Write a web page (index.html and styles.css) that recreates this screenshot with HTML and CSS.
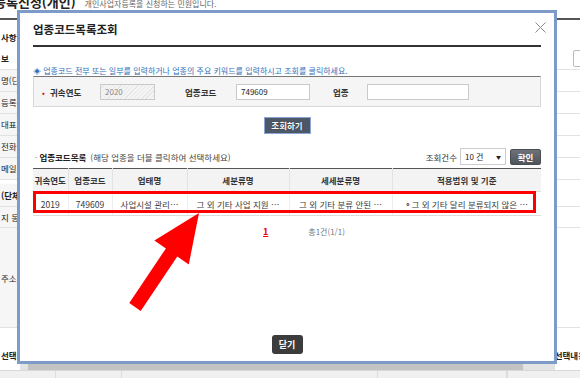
FILE: index.html
```html
<!DOCTYPE html>
<html lang="ko">
<head>
  <meta charset="UTF-8" />
  <title>등록신청(개인) - 업종코드목록조회</title>
  <link rel="stylesheet" href="styles.css">
</head>
<body>
  <div class="page">
    <div class="page-head">
      <h2>등록신청(개인)</h2>
      <span class="desc">개인사업자등록을 신청하는 민원입니다.</span>
    </div>
    <div class="form">
      <div class="row sec sec-first"><span class="lbl">사항</span></div>
      <div class="row sec"><span class="lbl">보</span><span class="bg-btn"></span></div>
      <div class="row"><span class="lbl">명(단체명)</span></div>
      <div class="row"><span class="lbl">등록번호</span></div>
      <div class="row"><span class="lbl">대표자</span></div>
      <div class="row"><span class="lbl">전화번호</span></div>
      <div class="row"><span class="lbl">메일주소</span></div>
      <div class="row row-t1"><span class="lbl lbl-b">(단체)</span></div>
      <div class="row row-t2"><span class="lbl">지 동</span></div>
      <div class="row row-addr"><span class="lbl">주소</span></div>
      <div class="row sec row-sel"><span class="lbl">선택</span><span class="sel-title">선택내용</span></div>
      <div class="grid-head">
        <span style="width:55px"></span><span style="width:65px"></span><span style="width:255px"></span><span style="width:128px"></span><span></span>
      </div>
    </div>
  </div>

  <!-- 업종코드 조회 레이어 -->
  <div class="layer">
    <div class="layer-head">
      <h3>업종코드목록조회</h3>
      <svg class="close" viewBox="0 0 11 11"><path d="M0.5 0.5L10.5 10.5M10.5 0.5L0.5 10.5" stroke="#8a8a8a" stroke-width="1" fill="none"/></svg>
    </div>

    <p class="guide">◈ 업종코드 전부 또는 일부를 입력하거나 업종의 주요 키워드를 입력하시고 조회를 클릭하세요.</p>

    <div class="search">
      <span class="req">•</span>
      <label class="l1">귀속연도</label>
      <span class="inp dis w1">2020</span>
      <label class="l2">업종코드</label>
      <span class="inp w2">749609</span>
      <label class="l3">업종</label>
      <span class="inp w3"></span>
    </div>

    <div class="btn-row">
      <span class="btn-search">조회하기</span>
    </div>

    <div class="list-head">
      <div class="list-title"><span class="dot">·</span><b>업종코드목록</b><span class="hint">(해당 업종을 더블 클릭하여 선택하세요)</span></div>
      <div class="cnt">
        <span>조회건수</span>
        <span class="sel">10 건<i>▼</i></span>
        <span class="btn-ok">확인</span>
      </div>
    </div>

    <div class="tbl-wrap">
      <table>
        <colgroup>
          <col style="width:35px"><col style="width:44px"><col style="width:75px"><col style="width:102px"><col style="width:103px"><col>
        </colgroup>
        <thead>
          <tr><th>귀속연도</th><th>업종코드</th><th>업태명</th><th>세분류명</th><th>세세분류명</th><th>적용범위 및 기준</th></tr>
        </thead>
        <tbody>
          <tr><td>2019</td><td>749609</td><td>사업시설 관리…</td><td>그 외 기타 사업 지원 …</td><td>그 외 기타 분류 안된 …</td><td>∘그 외 기타 달리 분류되지 않은 …</td></tr>
        </tbody>
      </table>
      <div class="mark"></div>
    </div>

    <div class="pager">
      <a href="#">1</a>
      <span class="total">총1건(1/1)</span>
    </div>

    <div class="foot">
      <span class="btn-close">닫기</span>
    </div>
  </div>

  <div class="hscroll"><span class="thumb"></span></div>

  <svg class="arrow" width="580" height="378" viewBox="0 0 580 378">
    <polygon points="199,213 188.8,264.4 177.3,256.4 140.7,311 129.3,303 165.9,248.4 154.4,240.4" fill="#ff0000"/>
  </svg>
</body>
</html>
```

FILE: styles.css
```css
body {
  margin: 0;
  width: 580px;
  height: 378px;
  overflow: hidden;
  position: relative;
  font-family: "Noto Sans CJK KR", "Noto Sans", sans-serif;
  font-size: 8.5px;
  color: #333;
  background: #fff;
}

/* background page */
.page-head {
  display: flex;
  align-items: baseline;
  height: 26px;
  margin: -8px 0 0 -6px;
}
.page-head h2 {
  margin: 0;
  font-size: 13px;
  line-height: 20px;
  font-weight: bold;
  color: #222;
}
.desc {
  margin-left: 9px;
  font-size: 8px;
  color: #666;
}
.form {
  border-top: 2px solid #555;
}
.row {
  display: flex;
  height: 22px;
  box-sizing: border-box;
  border-bottom: 1px solid #e2e2e2;
  line-height: 21px;
  white-space: nowrap;
}
.lbl {
  width: 70px;
  padding-left: 1px;
  background: #f6f6f6;
  color: #222;
}
.lbl-b {
  font-weight: bold;
}
.sec .lbl {
  background: none;
  font-weight: bold;
}
.sec-first {
  height: 28px;
  padding-top: 7px;
  line-height: 20px;
  border-bottom: none;
}
.bg-btn {
  align-self: center;
  margin-left: auto;
  margin-right: -20px;
  width: 25px;
  height: 15px;
  border: 1px solid #bbb;
  border-radius: 2px;
  background: #fff;
}
.row-t1 {
  height: 27px;
  padding-top: 4px;
  line-height: 22px;
}
.row-t2 {
  height: 21px;
  line-height: 20px;
}
.row-addr {
  height: 100px;
  line-height: normal;
}
.row-addr .lbl {
  display: flex;
  align-items: center;
}
.row-sel {
  height: 42px;
  padding-top: 16px;
  line-height: 22px;
  border-bottom: none;
}
.sel-title {
  margin-left: auto;
  margin-right: -6px;
  font-weight: bold;
  color: #222;
}
.grid-head {
  display: flex;
  height: 20px;
  background: #f0f0f0;
  border-top: 1px solid #d8d8d8;
}
.grid-head span {
  border-right: 1px solid #dcdcdc;
}

/* layer popup */
.layer {
  position: absolute;
  left: 17px;
  top: 10px;
  width: 540px;
  height: 354px;
  box-sizing: border-box;
  border: 3px solid #7c9bc8;
  background: #fff;
  padding: 0 13px 7px;
  display: flex;
  flex-direction: column;
}
.layer-head {
  position: relative;
  height: 34px;
  box-sizing: border-box;
  border-bottom: 2px solid #333;
}
.layer-head h3 {
  margin: 0;
  font-size: 11.5px;
  line-height: 32px;
  font-weight: bold;
  color: #222;
}
.close {
  position: absolute;
  right: -5px;
  top: 9px;
  width: 11px;
  height: 11px;
}
.guide {
  margin: 19px 0 0;
  font-size: 8px;
  line-height: 10px;
  color: #2f6fba;
  white-space: nowrap;
}
.search {
  height: 31px;
  box-sizing: border-box;
  border: 1px solid #d8d8d8;
  border-top-color: #777;
  background: #f5f5f5;
  display: flex;
  align-items: center;
  padding-left: 8px;
}
.req {
  width: 8px;
  color: #e60000;
}
.search label {
  font-weight: bold;
  color: #333;
}
.l1 { width: 50px; }
.l2 { width: 51px; margin-left: 30px; }
.l3 { width: 34px; margin-left: 23px; }
.inp {
  height: 16px;
  box-sizing: border-box;
  border: 1px solid #c9c9c9;
  background: #fff;
  padding-left: 4px;
  line-height: 14px;
  font-size: 8px;
  color: #222;
}
.inp.dis {
  color: #888;
  background: repeating-linear-gradient(135deg, #f4f4f4 0 2px, #e7e7e7 2px 3px);
}
.w1 { width: 55px; }
.w2 { width: 74px; }
.w3 { width: 102px; }

.btn-row {
  margin-top: 10px;
  display: flex;
  justify-content: center;
}
.btn-search {
  width: 47px;
  height: 17px;
  box-sizing: border-box;
  border: 1px solid #8aa6d4;
  background: #4e5766;
  color: #fff;
  font-weight: bold;
  line-height: 15px;
  text-align: center;
  text-shadow: 0 0 1px #222;
}

.list-head {
  margin-top: 14px;
  height: 17px;
  display: flex;
  align-items: center;
  white-space: nowrap;
}
.list-title .dot {
  color: #888;
  margin: 0 2px 0 2px;
}
.list-title b {
  color: #222;
}
.hint {
  margin-left: 4px;
  color: #444;
}
.cnt {
  margin-left: auto;
  display: flex;
  align-items: center;
  color: #333;
}
.sel {
  margin-left: 3px;
  width: 46px;
  height: 17px;
  box-sizing: border-box;
  border: 1px solid #ccc;
  padding: 0 4px;
  display: flex;
  align-items: center;
  justify-content: space-between;
  font-size: 8px;
  color: #222;
}
.sel i {
  font-style: normal;
  font-size: 5px;
}
.btn-ok {
  margin-left: 4px;
  width: 31px;
  height: 16px;
  box-sizing: border-box;
  border: 1px solid #4a4d52;
  border-radius: 2px;
  background: linear-gradient(#6d7178, #50545b);
  color: #fff;
  font-weight: bold;
  line-height: 14px;
  text-align: center;
}

.tbl-wrap {
  position: relative;
  margin-top: 3px;
}
table {
  width: 100%;
  border-collapse: collapse;
  table-layout: fixed;
  border-top: 1px solid #555;
}
th {
  height: 22px;
  padding: 0;
  background: #f3f3f3;
  border-bottom: 1px solid #ddd;
  border-left: 1px solid #e3e3e3;
  font-weight: bold;
  color: #333;
}
td {
  height: 23px;
  padding: 0 2px;
  border-bottom: 1px solid #ddd;
  border-left: 1px solid #eee;
  text-align: center;
  color: #3a3a3a;
  white-space: nowrap;
  overflow: hidden;
}
th:first-child,
td:first-child {
  border-left: none;
}
.mark {
  position: absolute;
  left: 0;
  top: 23px;
  width: 503px;
  height: 22px;
  box-sizing: border-box;
  border: 3px solid #f00;
}

.pager {
  margin-top: 10px;
  padding-left: 230px;
  display: flex;
  align-items: center;
  line-height: 12px;
}
.pager a {
  color: #e00;
  font-weight: bold;
  font-size: 9px;
}
.total {
  margin-left: 40px;
  color: #777;
  font-size: 8px;
}

.foot {
  margin-top: auto;
  display: flex;
  justify-content: center;
}
.btn-close {
  width: 31px;
  height: 19px;
  border-radius: 3px;
  background: #3c3c3c;
  color: #fff;
  font-weight: bold;
  font-size: 9px;
  line-height: 19px;
  text-align: center;
}

.hscroll {
  position: absolute;
  left: 20px;
  top: 364px;
  width: 535px;
  height: 6px;
  background: #e3e3e3;
  display: flex;
}
.thumb {
  margin-left: 8px;
  width: 495px;
  background: #c3c3c3;
}
.arrow {
  position: absolute;
  left: 0;
  top: 0;
  pointer-events: none;
}
```
